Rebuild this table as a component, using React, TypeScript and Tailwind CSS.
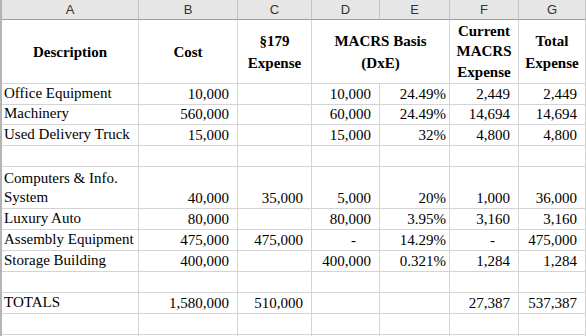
import React from "react";

type Row = {
  h: string;
  desc?: string;
  cost?: string;
  s179?: string;
  basis?: string;
  rate?: string;
  macrs?: string;
  total?: string;
  basisDash?: boolean;
  macrsDash?: boolean;
};

const rows: Row[] = [
  { h: "h-[21px]", desc: "Office Equipment", cost: "10,000", basis: "10,000", rate: "24.49%", macrs: "2,449", total: "2,449" },
  { h: "h-[20px]", desc: "Machinery", cost: "560,000", basis: "60,000", rate: "24.49%", macrs: "14,694", total: "14,694" },
  { h: "h-[21px]", desc: "Used Delivery Truck", cost: "15,000", basis: "15,000", rate: "32%", macrs: "4,800", total: "4,800" },
  { h: "h-[21px]" },
  { h: "h-[42px]", desc: "Computers & Info. System", cost: "40,000", s179: "35,000", basis: "5,000", rate: "20%", macrs: "1,000", total: "36,000" },
  { h: "h-[21px]", desc: "Luxury Auto", cost: "80,000", basis: "80,000", rate: "3.95%", macrs: "3,160", total: "3,160" },
  { h: "h-[21px]", desc: "Assembly Equipment", cost: "475,000", s179: "475,000", basisDash: true, rate: "14.29%", macrsDash: true, total: "475,000" },
  { h: "h-[21px]", desc: "Storage Building", cost: "400,000", basis: "400,000", rate: "0.321%", macrs: "1,284", total: "1,284" },
  { h: "h-[21px]" },
  { h: "h-[21px]", desc: "TOTALS", cost: "1,580,000", s179: "510,000", macrs: "27,387", total: "537,387" },
  { h: "h-[21px]" },
  { h: "h-[21px]" },
];

const grid = "border-r border-b border-[#d4d4d4]";
const cell = `${grid} flex items-end leading-[20px]`;
const head = `${grid} h-[64px] flex items-center justify-center text-center font-bold`;

function Num({ h, v, dash }: { h: string; v?: string; dash?: boolean }) {
  return (
    <div className={`${cell} ${h} justify-end ${dash ? "pr-[23px]" : "pr-[8px]"}`}>
      {dash ? "-" : v}
    </div>
  );
}

export default function App() {
  const letters = ["A", "B", "C", "D", "E", "F", "G"];
  return (
    <div
      className="w-[586px] h-[336px] overflow-hidden bg-white border-l-2 border-[#b4b4b4] text-[15px] text-black"
      style={{ fontFamily: '"Liberation Serif", "Times New Roman", serif' }}
    >
      <div className="grid grid-cols-[137px_99px_74px_68px_70px_69px_67px]">
        {letters.map((l) => (
          <div
            key={l}
            className="h-[20px] bg-[#e6e6e6] border-r border-[#c4c4c4] border-b border-b-[#9e9e9e] flex items-center justify-center text-[13px] text-[#333]"
            style={{ fontFamily: '"Liberation Sans", Arial, sans-serif' }}
          >
            {l}
          </div>
        ))}

        <div className={`${head} leading-[20px]`}>Description</div>
        <div className={`${head} leading-[20px]`}>Cost</div>
        <div className={`${head} leading-[22px]`}>
          §179<br />Expense
        </div>
        <div className={`${head} col-span-2 leading-[22px]`}>
          MACRS Basis<br />(DxE)
        </div>
        <div className={`${head} leading-[20.5px]`}>
          Current<br />MACRS<br />Expense
        </div>
        <div className={`${head} leading-[22px]`}>
          Total<br />Expense
        </div>

        {rows.map((r, i) => (
          <React.Fragment key={i}>
            <div className={`${cell} ${r.h} pl-[2px] pb-[1px]`}>
              <span className="leading-[19px]">{r.desc}</span>
            </div>
            <Num h={r.h} v={r.cost} />
            <Num h={r.h} v={r.s179} />
            <Num h={r.h} v={r.basis} dash={r.basisDash} />
            <div className={`${cell} ${r.h} justify-end pr-[3px]`}>{r.rate}</div>
            <Num h={r.h} v={r.macrs} dash={r.macrsDash} />
            <Num h={r.h} v={r.total} />
          </React.Fragment>
        ))}
      </div>
    </div>
  );
}
